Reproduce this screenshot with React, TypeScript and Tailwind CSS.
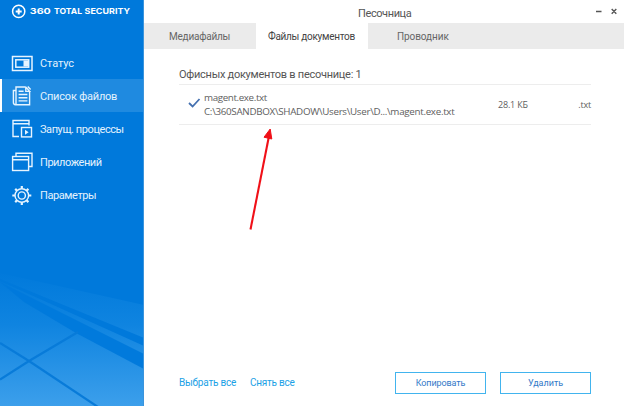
import React from 'react';

const LIGHT = '#e6f4ff';

function StatusIcon() {
  return (
    <svg width="22" height="22" viewBox="0 0 22 22" fill="none" stroke={LIGHT} strokeWidth="1.5">
      <rect x="1.5" y="4.5" width="19.5" height="14" />
      <rect x="4.8" y="7.8" width="12.9" height="7.4" />
      <rect x="12.5" y="8.5" width="5" height="6" fill={LIGHT} stroke="none" />
    </svg>
  );
}

function FilesIcon() {
  return (
    <svg width="22" height="22" viewBox="0 0 22 22" fill="none" stroke={LIGHT} strokeWidth="1.4">
      <path d="M14.8 2H5V19.6M5 5.5H2.4V17.6Q2.4 19.7 4.4 19.7H18.6V6.4" />
      <path d="M14.8 2V6.4H18.6L14.8 2M16.8 1.4L19.6 4.4M7.6 6.3H12.6M7.6 9.5H16.4M7.6 12.7H16.4M7.6 15.9H16.4" />
    </svg>
  );
}

function ProcessIcon() {
  return (
    <svg width="22" height="22" viewBox="0 0 22 22" fill="none" stroke={LIGHT} strokeWidth="1.4">
      <path d="M8 18.5H2V2.5H18V7.5M2 5.7H18" />
      <rect x="10.5" y="9.5" width="10" height="9.4" />
      <path d="M14 11.7V16.7L17.6 14.2Z" fill={LIGHT} stroke="none" />
    </svg>
  );
}

function AppsIcon() {
  return (
    <svg width="22" height="22" viewBox="0 0 22 22" fill="none" stroke={LIGHT} strokeWidth="1.4">
      <rect x="1.6" y="5.5" width="16" height="14" />
      <path d="M1.6 8.8H17.6M5 5V2.2H21V15.5H18" />
    </svg>
  );
}

function GearIcon() {
  return (
    <svg width="22" height="22" viewBox="0 0 22 22" fill="none" stroke={LIGHT} strokeWidth="1.4">
      <circle cx="10.8" cy="11.5" r="6.8" />
      <circle cx="10.8" cy="11.5" r="3.6" />
      <path
        strokeWidth="2.2"
        d="M10.8 4.8V2M10.8 18.2V21M4.1 11.5H1.3M17.5 11.5H20.3M6.1 6.8L4.2 4.9M15.5 6.8L17.4 4.9M6.1 16.2L4.2 18.1M15.5 16.2L17.4 18.1"
      />
    </svg>
  );
}

const NAV = [
  { label: 'Статус', icon: <StatusIcon />, track: 'tracking-[-0.1px]' },
  { label: 'Список файлов', icon: <FilesIcon />, track: 'tracking-[-0.2px]', active: true },
  { label: 'Запущ. процессы', icon: <ProcessIcon />, track: 'tracking-[-0.42px]' },
  { label: 'Приложений', icon: <AppsIcon />, track: 'tracking-[-0.45px]' },
  { label: 'Параметры', icon: <GearIcon />, track: 'tracking-[-0.42px]' },
];

function Backdrop() {
  return (
    <svg className="absolute bottom-0 left-0" width="144" height="136" viewBox="0 270 144 136">
      <defs>
        <linearGradient id="glow" x1="0" y1="270" x2="0" y2="406" gradientUnits="userSpaceOnUse">
          <stop offset="0" stopColor="#0079db" />
          <stop offset="0.4" stopColor="#0f84e0" />
          <stop offset="1" stopColor="#3c9feb" />
        </linearGradient>
      </defs>
      <path d="M0 273L144 305V406H0Z" fill="url(#glow)" />
      <g fill="#0079db">
        <path d="M0 279L144 338V346L0 281Z" />
        <path d="M0 282L144 354V369L76 333L24 302Z" fillOpacity="0.95" />
      </g>
      <path d="M0 343L29 361L98 407M0 379.5L29 361L78 332" fill="none" stroke="#087bd9" strokeWidth="2.2" />
    </svg>
  );
}

function Sidebar() {
  return (
    <aside className="relative h-full w-[144px] shrink-0 overflow-hidden border-r border-[#3b94dc] bg-[#0079db]">
      <Backdrop />
      <div className="relative flex h-[46px] items-start pt-[4px] pl-[11px]">
        <svg
          width="120"
          height="15"
          viewBox="0 0 120 15"
          fill="#fff"
          className="font-['Inter',sans-serif] text-[7.6px] font-bold"
        >
          <circle cx="7.7" cy="7.4" r="6.1" fill="none" stroke="#fff" strokeWidth="1.5" />
          <path d="M7.7 4.4V10.4M4.7 7.4H10.7" stroke="#fff" strokeWidth="2" />
          <text x="18.8" y="9.9" textLength="21" lengthAdjust="spacingAndGlyphs">360</text>
          <text x="43" y="9.9" textLength="28" lengthAdjust="spacingAndGlyphs">TOTAL</text>
          <text x="73.6" y="9.9" textLength="45.4" lengthAdjust="spacingAndGlyphs">SECURITY</text>
        </svg>
      </div>
      <nav className="relative font-[Roboto,sans-serif] text-[11px] text-[#e4f2fd]">
        {NAV.map((item) => (
          <div
            key={item.label}
            className={
              item.active
                ? 'flex h-[33px] items-center gap-[7px] border-l-2 border-white bg-[#1f8ae0] pl-[9px]'
                : 'flex h-[33px] items-center gap-[7px] pl-[11px]'
            }
          >
            {item.icon}
            <span className={'pt-[4px] whitespace-nowrap ' + item.track}>{item.label}</span>
          </div>
        ))}
      </nav>
    </aside>
  );
}

export default function App() {
  return (
    <div className="flex h-[406px] w-[624px] overflow-hidden bg-white font-[Roboto,sans-serif] text-[#555]">
      <Sidebar />
      <main className="flex min-w-0 flex-1 flex-col">
        <header className="flex h-[23px] items-start pt-[5px] pl-[214px] text-[11px] leading-[17px]">
          <span className="w-[238px] tracking-[-0.4px]">Песочница</span>
          <svg width="22" height="12" viewBox="0 0 22 12" fill="none" stroke="#555" strokeWidth="1.4">
            <path d="M0 6.5H5.5M15.7 4L20.3 8.8M20.3 4L15.7 8.8" />
          </svg>
        </header>
        <div className="flex h-[26px] shrink-0 bg-[#ebebeb] text-[10px] leading-[27px] text-[#666]">
          <div className="w-[112px] pl-[25px] tracking-[-0.22px] whitespace-nowrap">Медиафайлы</div>
          <div className="w-[112px] bg-white pl-[12px] tracking-[-0.28px] whitespace-nowrap text-[#444]">
            Файлы документов
          </div>
          <div className="pl-[29px] tracking-[-0.08px] whitespace-nowrap">Проводник</div>
        </div>
        <section className="relative ml-[35px] w-[412px] pt-[15px]">
          <h1 className="h-[21px] border-b border-[#ededed] text-[11px] leading-[21px] tracking-[-0.27px] whitespace-nowrap">
            Офисных документов в песочнице: 1
          </h1>
          <div className="flex h-[40px] items-start border-b border-[#ededed] font-['Open_Sans',sans-serif] text-[#606060]">
            <svg className="mt-[11px] ml-[8px] shrink-0" width="17" height="14" viewBox="0 0 17 14">
              <path d="M2 7L5.6 10.5L12.5 3" fill="none" stroke="#4470b0" strokeWidth="1.8" />
            </svg>
            <div className="w-[294px] pt-[6px] text-[9.8px] leading-[14px] whitespace-nowrap">
              <div className="tracking-[-0.38px]">magent.exe.txt</div>
              <div className="tracking-[-0.3px]">C:\360SANDBOX\SHADOW\Users\User\D...\magent.exe.txt</div>
            </div>
            <span className="w-[50px] pt-[13px] text-[9px] leading-[14px] tracking-[-0.2px]">28.1 КБ</span>
            <span className="ml-auto pt-[13px] text-[9px] leading-[14px] tracking-[-0.2px]">.txt</span>
          </div>
          <svg className="absolute top-[77px] left-[65px]" width="34" height="108" viewBox="0 0 34 108">
            <path d="M6.5 103.5L24.6 12" stroke="#f01018" strokeWidth="2.1" />
            <path d="M26.2 3L20 11.2L27.8 13Z" fill="#f01018" stroke="#f01018" />
          </svg>
        </section>
        <footer className="mt-auto mb-[12px] ml-[35px] flex h-[22px] shrink-0 items-center">
          <span className="w-[71px] pb-[2px] text-[10px] tracking-[-0.2px] whitespace-nowrap text-[#1ba1e6]">
            Выбрать все
          </span>
          <span className="w-[145px] pb-[2px] text-[10px] tracking-[-0.25px] whitespace-nowrap text-[#1ba1e6]">
            Снять все
          </span>
          <button className="mr-[14px] h-[22px] w-[91px] border border-[#42b4ee] pt-[2px] text-[9px] tracking-[-0.1px] text-[#3379c8]">
            Копировать
          </button>
          <button className="h-[22px] w-[91px] border border-[#42b4ee] pt-[2px] text-[9px] text-[#3379c8]">
            Удалить
          </button>
        </footer>
      </main>
    </div>
  );
}
